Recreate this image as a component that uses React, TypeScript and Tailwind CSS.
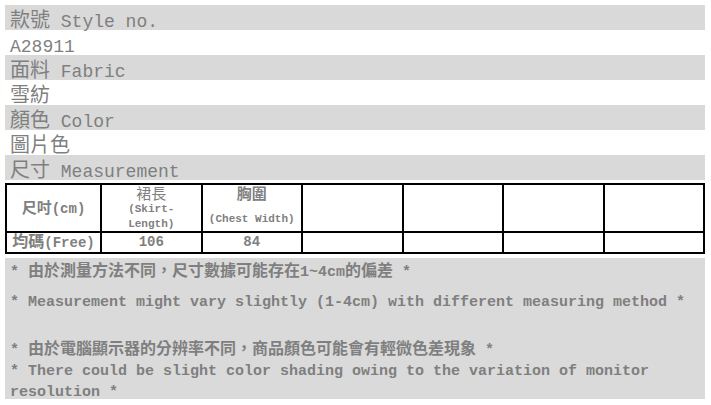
import React from "react";

const CJK_RE = /([\u3000-\u9fff\uff00-\uffef]+)/;
const CJK_TEST = /[\u3000-\u9fff\uff00-\uffef]/;

function Mixed({ text, cjk }: { text: string; cjk: string }) {
  const parts = text.split(CJK_RE).filter((p) => p.length > 0);
  return (
    <>
      {parts.map((p, i) =>
        CJK_TEST.test(p) ? (
          <span key={i} className={cjk}>
            {p}
          </span>
        ) : (
          <React.Fragment key={i}>{p}</React.Fragment>
        )
      )}
    </>
  );
}

const rows: { text: string; gray: boolean }[] = [
  { text: "款號 Style no.", gray: true },
  { text: "A28911", gray: false },
  { text: "面料 Fabric", gray: true },
  { text: "雪紡", gray: false },
  { text: "顏色 Color", gray: true },
  { text: "圖片色", gray: false },
  { text: "尺寸 Measurement", gray: true },
];

const rowCjk = "font-['Noto_Sans_CJK_TC',sans-serif] text-[20px] leading-[16px]";
const cellCjk = "font-['Noto_Sans_CJK_TC',sans-serif] text-[15px]";
const dataCjk = "font-['Noto_Sans_CJK_TC',sans-serif] text-[16px] leading-[15px]";
const noteCjk = "font-['Noto_Sans_CJK_TC',sans-serif] text-[16px] leading-[15px]";

export default function App() {
  return (
    <div className="w-[711px] h-[405px] bg-white overflow-hidden font-['Liberation_Mono','Noto_Sans_CJK_TC',monospace] text-[#7f7f7f]">
      <div className="pl-[5px] pt-[5px] w-[705px]">
        {rows.map((r, i) => (
          <div
            key={i}
            className={
              (r.gray ? "bg-[#d9d9d9] " : "bg-white ") +
              "h-[25px] pl-[5px] flex items-end text-[18px] leading-[16px] whitespace-pre"
            }
          >
            <div>
              <Mixed text={r.text} cjk={rowCjk} />
            </div>
          </div>
        ))}

        <div className="mt-[3px] w-[700px] bg-black p-[2px] grid grid-cols-[93px_repeat(6,1fr)] grid-rows-[46px_19px] gap-[2px] font-bold">
          <div className="bg-white flex items-center justify-center text-[14px] leading-[16px]">
            <span>
              <Mixed text="尺吋(cm)" cjk={cellCjk} />
            </span>
          </div>
          <div className="bg-white flex flex-col items-center overflow-hidden leading-[16px]">
            <span className={cellCjk + " leading-[16px] font-normal"}>裙長</span>
            <span className="text-[11px] leading-[16px]">(Skirt-</span>
            <span className="text-[11px] leading-[15px]">Length)</span>
          </div>
          <div className="bg-white flex flex-col items-center leading-[16px]">
            <span className={cellCjk + " leading-[16px]"}>胸圍</span>
            <span className="mt-[10px] text-[11px] leading-[16px] whitespace-pre">(Chest Width)</span>
          </div>
          <div className="bg-white" />
          <div className="bg-white" />
          <div className="bg-white" />
          <div className="bg-white" />

          <div className="bg-white flex items-center justify-center text-[14px] leading-[19px] whitespace-pre">
            <span>
              <Mixed text="均碼(Free)" cjk={dataCjk} />
            </span>
          </div>
          <div className="bg-white flex items-center justify-center text-[14px] leading-[19px]">106</div>
          <div className="bg-white flex items-center justify-center text-[14px] leading-[19px]">84</div>
          <div className="bg-white" />
          <div className="bg-white" />
          <div className="bg-white" />
          <div className="bg-white" />
        </div>

        <div className="mt-[4px] w-[700px] h-[141px] bg-[#dadada] px-[5px] pt-[4px] font-bold text-[15px] leading-[21px]">
          <div className="whitespace-pre">
            <Mixed text="* 由於測量方法不同，尺寸數據可能存在1~4cm的偏差 *" cjk={noteCjk} />
          </div>
          <div className="mt-[9px]">
            * Measurement might vary slightly (1-4cm) with different measuring method *
          </div>
          <div className="mt-[27px] whitespace-pre">
            <Mixed text="* 由於電腦顯示器的分辨率不同，商品顏色可能會有輕微色差現象 *" cjk={noteCjk} />
          </div>
          <div>
            * There could be slight color shading owing to the variation of monitor resolution *
          </div>
        </div>
      </div>
    </div>
  );
}
